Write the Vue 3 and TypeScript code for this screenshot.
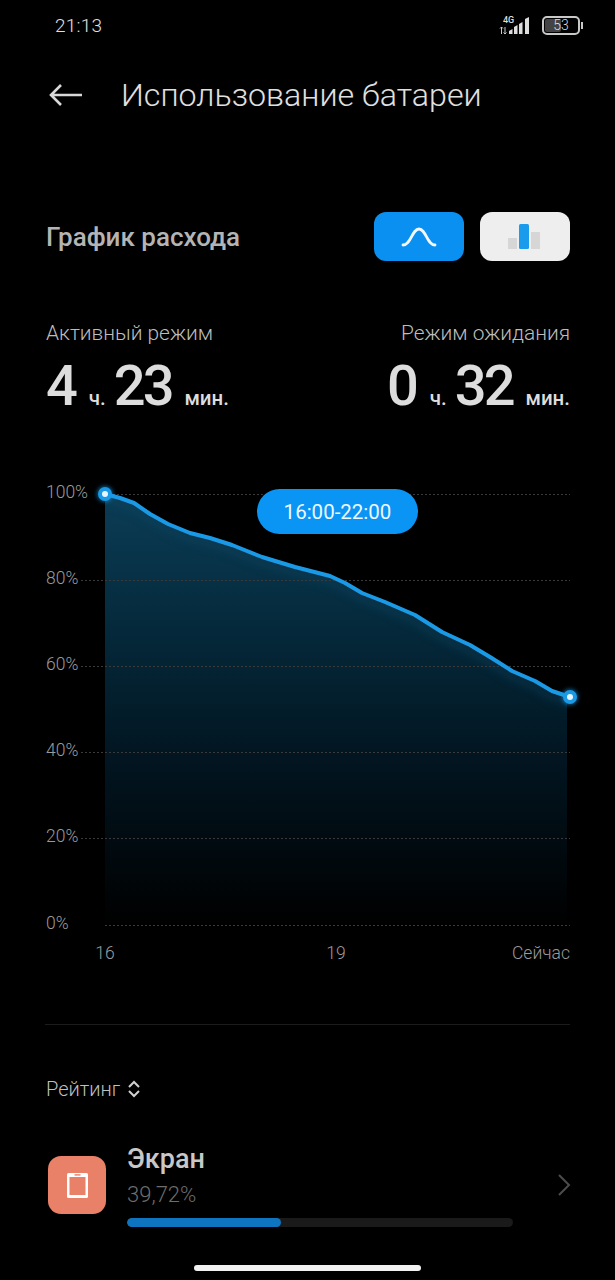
<script setup lang="ts">
const pts: [number, number][] = [[105,494],[120,498],[134,503],[150,514],[168,524],[190,533],[210,538],[232,545],[262,557],[295,567],[330,576],[345,583],[362,593],[385,602],[415,615],[442,632],[470,645],[490,657],[512,671],[535,681],[552,691],[570,697]]
const line = pts.map((p, i) => `${i ? 'L' : 'M'}${p[0]} ${p[1] - 480}`).join(' ')
const area = pts.slice(0, -1).map((p, i) => `${i ? 'L' : 'M'}${p[0]} ${p[1] - 480}`).join(' ') + ' L567 215 L567 445 L105 445 Z'
const grid = [
  { label: '100%', y: 14, x: 105 }, { label: '80%', y: 100, x: 81 }, { label: '60%', y: 186, x: 81 },
  { label: '40%', y: 272, x: 81 }, { label: '20%', y: 358, x: 81 }, { label: '0%', y: 445, x: 105 },
]
const ticks = ['16', '19', 'Сейчас']
</script>

<template>
  <div class="page">
    <header class="status">
      <span class="time">21:13</span>
      <div class="status-icons">
        <svg width="36" height="20" viewBox="0 0 36 20">
          <text x="5" y="8" class="net">4G</text>
          <path d="M3.500 12v7M2 13.500L3.500 12 5 13.500M7 19v-7M5.500 17.500L7 19l1.500-1.500" stroke="#ccc" stroke-width="1" fill="none" />
          <path d="M11 19v-3l3.500-2v5zM16 19v-7l3.500-2v9zM21 19V9l3.500-2v12zM27 19V4l4-2v17z" fill="#ddd" />
        </svg>
        <div class="battery">
          <div class="battery-body"><i class="battery-fill"></i><span>53</span></div>
          <i class="battery-tip"></i>
        </div>
      </div>
    </header>

    <div class="titlebar">
      <svg width="36" height="26" viewBox="0 0 36 26" class="back">
        <path d="M34 13H3M13 3L3 13l10 10" fill="none" stroke="#d8d8d8" stroke-width="2.600" />
      </svg>
      <h1>Использование батареи</h1>
    </div>

    <div class="section-head">
      <h2>График расхода</h2>
      <div class="toggles">
        <button class="toggle on">
          <svg width="36" height="20" viewBox="0 0 36 20"><path d="M2 18C10 18 11 2 18 2S26 18 34 18" fill="none" stroke="#f2f8fd" stroke-width="2.800" stroke-linecap="round" /></svg>
        </button>
        <button class="toggle off">
          <svg width="34" height="26" viewBox="0 0 34 26">
            <rect x="0" y="14" width="9" height="11" fill="#d6d6d6" />
            <rect x="11" y="0" width="10" height="25" rx="1.500" fill="#1a9bec" />
            <rect x="23" y="8" width="9" height="17" fill="#d6d6d6" />
          </svg>
        </button>
      </div>
    </div>

    <div class="stats">
      <div class="stat">
        <div class="stat-label">Активный режим</div>
        <div class="stat-value"><b>4</b><small>ч.</small><b>23</b><small>мин.</small></div>
      </div>
      <div class="stat right">
        <div class="stat-label">Режим ожидания</div>
        <div class="stat-value"><b>0</b><small>ч.</small><b>32</b><small>мин.</small></div>
      </div>
    </div>

    <div class="chart">
      <svg width="615" height="490" viewBox="0 0 615 490" class="chart-svg">
        <defs>
          <linearGradient id="fill" x1="0" y1="14" x2="0" y2="445" gradientUnits="userSpaceOnUse">
            <stop offset="0" stop-color="#0b3d56" />
            <stop offset="0.3" stop-color="#052a3c" />
            <stop offset="0.6" stop-color="#021622" />
            <stop offset="1" stop-color="#000" />
          </linearGradient>
          <filter id="glow" x="-10%" y="-10%" width="120%" height="130%"><feGaussianBlur stdDeviation="4" /></filter>
          <filter id="dotglow" x="-60%" y="-60%" width="220%" height="220%"><feGaussianBlur stdDeviation="2" /></filter>
          <clipPath id="areaClip"><path :d="area" /></clipPath>
        </defs>
        <path :d="area" fill="url(#fill)" />
        <g clip-path="url(#areaClip)">
          <path :d="line" fill="none" stroke="#0b4a68" stroke-width="8" filter="url(#glow)" transform="translate(0 6)" opacity="0.35" />
        </g>
        <g v-for="g in grid" :key="g.label">
          <line :x1="g.x" :x2="570" :y1="g.y + 0.5" :y2="g.y + 0.5" stroke="#3a3a3a" stroke-dasharray="2 2" />
          <text x="46" :y="g.y + 4" class="axis">{{ g.label }}</text>
        </g>
        <path :d="line" fill="none" stroke="#1a9ae6" stroke-width="4" stroke-linejoin="round" stroke-linecap="round" />
        <circle cx="105" cy="14" r="8" fill="#1a9ae6" filter="url(#dotglow)" opacity="0.6" />
        <circle cx="105" cy="14" r="7" fill="#1a9ae6" />
        <circle cx="105" cy="14" r="3" fill="#e8f6ff" />
        <circle cx="570" cy="217" r="8" fill="#1a9ae6" filter="url(#dotglow)" opacity="0.6" />
        <circle cx="570" cy="217" r="7" fill="#1a9ae6" />
        <circle cx="570" cy="217" r="3" fill="#e8f6ff" />
        <text x="105" y="479" text-anchor="middle" class="axis">{{ ticks[0] }}</text>
        <text x="336" y="479" text-anchor="middle" class="axis">{{ ticks[1] }}</text>
        <text x="570" y="479" text-anchor="end" class="axis">{{ ticks[2] }}</text>
      </svg>
      <div class="pill">16:00-22:00</div>
    </div>

    <div class="divider"></div>

    <div class="sort">Рейтинг
      <svg width="14" height="18" viewBox="0 0 14 18"><path d="M2 7l5-5 5 5M2 11l5 5 5-5" fill="none" stroke="#d0d0d0" stroke-width="2" /></svg>
    </div>

    <div class="row">
      <div class="app-icon">
        <svg width="21" height="25" viewBox="0 0 21 25">
          <rect x="0" y="0" width="21" height="25" rx="1.500" fill="#fff" />
          <rect x="2.500" y="4" width="16" height="18" fill="#e98068" />
          <rect x="7.500" y="1.200" width="6" height="1.400" fill="#e98068" />
        </svg>
      </div>
      <div class="row-body">
        <div class="row-name">Экран</div>
        <div class="row-pct">39,72%</div>
        <div class="bar"><i class="bar-fill" :style="{ width: '39.9%' }"></i></div>
      </div>
      <svg class="chev" width="14" height="24" viewBox="0 0 14 24"><path d="M2 2l10 10L2 22" fill="none" stroke="#4c4c4c" stroke-width="2" /></svg>
    </div>

    <div class="home"></div>
  </div>
</template>

<style>
body { background: #000; }
</style>

<style scoped>
.page {
  width: 615px; height: 1280px; background: #000; color: #ddd; overflow: hidden; position: relative;
  font-family: Roboto, "Noto Sans", sans-serif; box-sizing: border-box;
}
.status { display: flex; justify-content: space-between; align-items: center; height: 26px; padding: 12px 32px 1px 55px; }
.time { font-size: 19px; font-weight: 300; color: #e0e0e0; letter-spacing: 0.2px; }
.status-icons { display: flex; align-items: center; gap: 8px; }
.net { font: 500 9px Roboto, sans-serif; fill: #ddd; }
.battery { display: flex; align-items: center; gap: 1px; }
.battery-body { width: 34px; height: 15px; border: 2px solid #c8c8c8; border-radius: 5px; position: relative; display: flex; align-items: center; justify-content: center; font-size: 14px; font-weight: 300; color: #ddd; }
.battery-body span { position: relative; }
.battery-fill { position: absolute; left: 1px; top: 1px; bottom: 1px; width: 16px; background: #444; border-radius: 2px; }
.battery-tip { width: 2px; height: 7px; background: #c8c8c8; }
.titlebar { display: flex; align-items: center; height: 60px; padding: 26px 0 0 48px; box-sizing: content-box; }
.back { margin-right: 37px; }
h1 { margin: 0; font-size: 32.200px; font-weight: 300; color: #e0e0e0; white-space: nowrap; }
.section-head { display: flex; justify-content: space-between; align-items: center; margin-top: 87px; padding: 0 45px 0 46px; }
h2 { margin: 0; font-size: 26px; font-weight: 500; color: #b4b4b4; }
.toggles { display: flex; gap: 16px; }
.toggle { width: 90px; height: 49px; border: 0; border-radius: 12px; padding: 0; display: flex; align-items: center; justify-content: center; }
.on { background: #0a90f0; }
.off { background: #eee; }
.stats { display: flex; justify-content: space-between; margin-top: 60px; padding: 0 45px 0 46px; }
.stat-label { font-size: 20.900px; font-weight: 300; color: #bdbdbd; line-height: 24px; }
.right { text-align: right; }
.stat-value { display: flex; align-items: baseline; margin-top: 11px; line-height: 60px; height: 60px; color: #ddd; }
.right .stat-value { justify-content: flex-end; }
.stat-value b { font-size: 56px; font-weight: 500; letter-spacing: -3px; }
.stat-value small { font-size: 20.500px; font-weight: 500; margin: 0 8px 0 14px; }
.stat-value small:last-child { margin-right: 0; margin-left: 13px; }
.chart { position: relative; height: 490px; margin-top: 64px; }
.chart-svg { display: block; }
.axis { font: 300 17.500px Roboto, sans-serif; fill: #9a9a9a; }
.pill { position: absolute; left: 257px; top: 9px; width: 161px; height: 45px; border-radius: 23px; background: #0a94f3; color: #eef8ff; display: flex; align-items: center; justify-content: center; font-size: 20.500px; }
.divider { height: 1px; background: #1c1c1c; margin: 54px 45px 0; }
.sort { display: flex; align-items: center; gap: 7px; margin: 50px 0 0 46px; font-size: 20px; font-weight: 300; color: #bfbfbf; line-height: 28px; }
.row { display: flex; align-items: flex-start; margin: 40px 0 0 48px; }
.app-icon { width: 58px; height: 58px; margin-top: 13px; border-radius: 13px; background: #e98068; display: flex; align-items: center; justify-content: center; flex: none; }
.row-body { width: 386px; margin-left: 21px; }
.row-name { font-size: 27px; font-weight: 500; color: #c8c8c8; line-height: 32px; }
.row-pct { font-size: 22px; font-weight: 300; color: #6d6d6d; line-height: 28px; margin-top: 6px; }
.bar { height: 9px; border-radius: 5px; background: #1a1a1a; margin-top: 9px; overflow: hidden; }
.bar-fill { display: block; height: 100%; border-radius: 5px; background: #0f74c0; }
.chev { margin: 30px 0 0 44px; }
.home { position: absolute; left: 194px; bottom: 9px; width: 227px; height: 6px; border-radius: 3px; background: #f2f2f2; }
</style>
